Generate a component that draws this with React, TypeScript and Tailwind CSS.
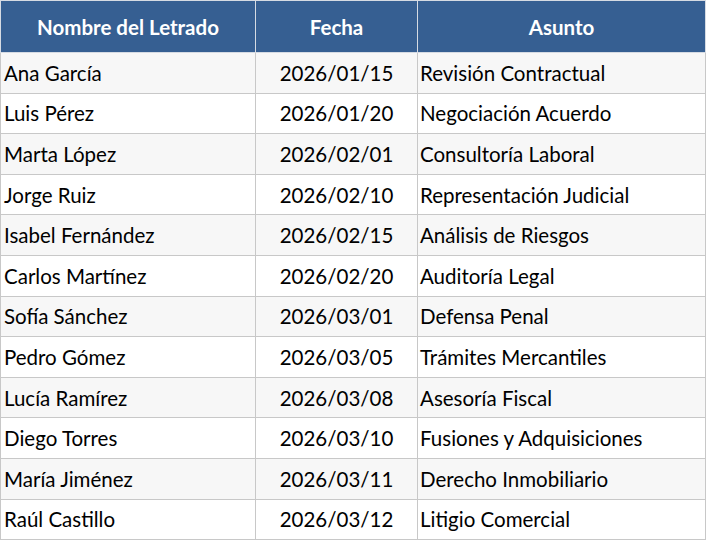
import React from 'react';

const rows = [
  ['Ana García', '2026/01/15', 'Revisión Contractual'],
  ['Luis Pérez', '2026/01/20', 'Negociación Acuerdo'],
  ['Marta López', '2026/02/01', 'Consultoría Laboral'],
  ['Jorge Ruiz', '2026/02/10', 'Representación Judicial'],
  ['Isabel Fernández', '2026/02/15', 'Análisis de Riesgos'],
  ['Carlos Martínez', '2026/02/20', 'Auditoría Legal'],
  ['Sofía Sánchez', '2026/03/01', 'Defensa Penal'],
  ['Pedro Gómez', '2026/03/05', 'Trámites Mercantiles'],
  ['Lucía Ramírez', '2026/03/08', 'Asesoría Fiscal'],
  ['Diego Torres', '2026/03/10', 'Fusiones y Adquisiciones'],
  ['María Jiménez', '2026/03/11', 'Derecho Inmobiliario'],
  ['Raúl Castillo', '2026/03/12', 'Litigio Comercial'],
];

export default function App() {
  return <div className="bg-white" style={{ fontFamily: 'Lato, "Open Sans", sans-serif' }}>
      <table className="w-[706px] border-collapse table-fixed text-[20.5px] leading-[24px] text-black">
        <colgroup>
          <col className="w-[255px]" />
          <col className="w-[162px]" />
          <col />
        </colgroup>
        <thead>
          <tr className="bg-[#365f92] text-white h-[52px]">
            <th className="border border-[#d6dbe3] font-bold px-[4px]">Nombre del Letrado</th>
            <th className="border border-[#d6dbe3] font-bold px-[4px]">Fecha</th>
            <th className="border border-[#d6dbe3] font-bold px-[4px]">Asunto</th>
          </tr>
        </thead>
        <tbody>
          {rows.map((r, i) => <tr key={i} className={i % 2 === 0 ? 'bg-[#f7f7f7] h-[40.6px]' : 'bg-white h-[40.6px]'}>
              <td className="border border-[#c8c8c8] px-[3px] text-left">{r[0]}</td>
              <td className="border border-[#c8c8c8] px-[3px] text-center">{r[1]}</td>
              <td className="border border-[#c8c8c8] px-[2px] text-left">{r[2]}</td>
            </tr>)}
        </tbody>
      </table>
    </div>;
}
